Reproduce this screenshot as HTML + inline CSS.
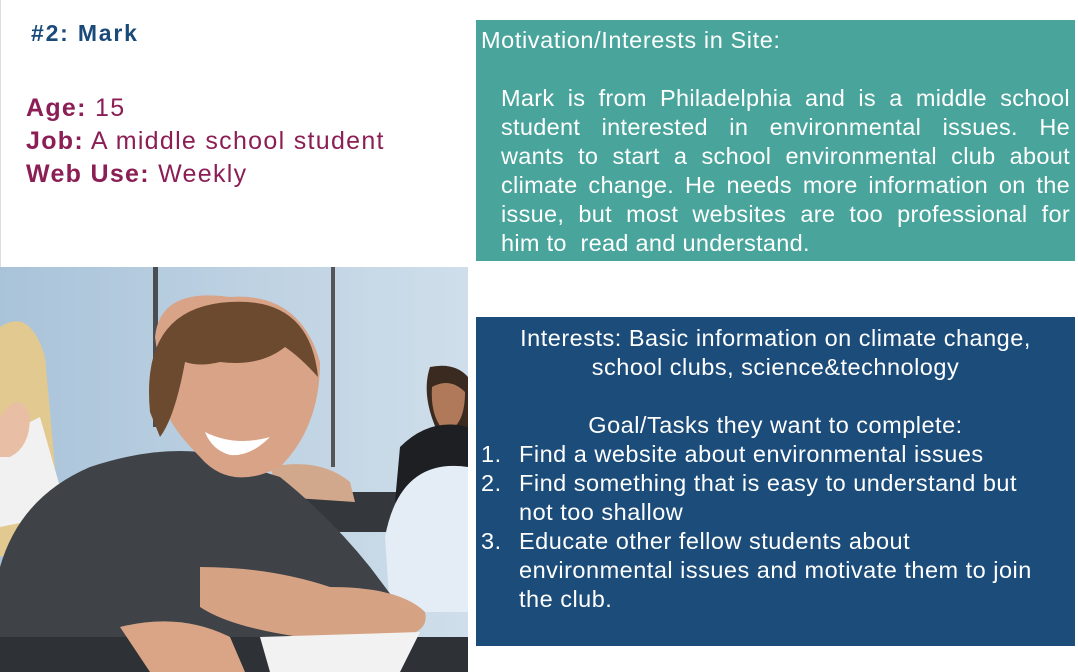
<!DOCTYPE html>
<html><head><meta charset="utf-8"><style>
*{margin:0;padding:0;box-sizing:border-box}
body{width:1078px;height:672px;background:#fff;position:relative;overflow:hidden;font-family:"Liberation Sans",Arial,sans-serif}
.abs{position:absolute}
.t{color:#1a4a7a;font-weight:bold;font-size:23px;letter-spacing:1.8px;left:31px;top:20px}
.info{left:26px;top:92px;color:#8b1f55;font-size:25px;letter-spacing:1.3px;line-height:33px;white-space:nowrap}
.teal{left:476px;top:20px;width:599px;height:241px;background:#49a59b;color:#fff;font-size:23.5px;letter-spacing:0.3px}
.blue{left:476px;top:317px;width:599px;height:329px;background:#1b4c7a;color:#fff;font-size:23.5px;letter-spacing:0.5px;line-height:29px;white-space:nowrap}
.teal .h{position:absolute;left:5px;top:7px;letter-spacing:0.6px}
.teal .p{position:absolute;left:25px;width:569px;line-height:29px}
.teal .p div{height:29px;white-space:nowrap;display:flex;justify-content:space-between}
.teal .p div.l{display:block}
.blue .c{text-align:center;width:599px}
.li{position:relative;padding-left:43px}
.li span{position:absolute;left:5px}
</style></head><body>
<div class="abs" style="left:0;top:0;width:1px;height:267px;background:#ddd"></div>
<div class="abs t">#2: Mark</div>
<div class="abs info"><b>Age:</b> 15<br><b>Job:</b> A middle school student<br><b>Web Use:</b> Weekly</div>
<svg class="abs" style="left:0;top:267px" width="468" height="405" viewBox="0 0 468 405">
<defs><linearGradient id="w" x1="0" x2="1"><stop offset="0" stop-color="#a9c3d9"/><stop offset="1" stop-color="#cfdeea"/></linearGradient></defs>
<rect width="468" height="405" fill="url(#w)"/>
<rect x="153" y="0" width="5" height="160" fill="#4a4d52"/>
<rect x="331" y="0" width="4" height="200" fill="#555"/>
<rect x="300" y="225" width="168" height="40" fill="#34383d"/>
<path d="M0 60 Q30 40 45 90 L55 200 L60 270 L0 290Z" fill="#e2c98f"/>
<path d="M0 170 L40 150 L60 220 L50 250 L0 260Z" fill="#f1f1f1"/>
<path d="M0 150 Q20 120 30 150 Q30 180 10 190 L0 190Z" fill="#e8bfa4"/>
<path d="M430 100 Q455 95 468 110 L468 170 L440 170 Q420 130 430 100Z" fill="#3a2a20"/>
<path d="M432 120 Q450 110 465 125 Q465 160 445 165 Q430 150 432 120Z" fill="#b07a5a"/>
<path d="M400 180 Q430 150 468 160 L468 250 L395 235Z" fill="#1d1f22"/>
<path d="M385 270 Q400 190 468 200 L468 345 L390 345Z" fill="#e4ecf6"/>
<path d="M270 200 Q320 190 350 215 L355 235 L280 230Z" fill="#d2a88c"/>
<path d="M0 405 L0 300 Q20 230 90 200 Q150 180 200 185 L280 210 Q330 250 370 300 L400 340 L380 370 L330 370 L300 405Z" fill="#3f4348"/>
<path d="M200 300 Q270 300 330 320 Q400 320 425 345 Q430 365 400 370 L300 370 Q230 360 200 340Z" fill="#d6a284"/>
<rect x="0" y="370" width="468" height="35" fill="#2e3236"/>
<path d="M260 370 L420 365 L400 405 L270 405Z" fill="#f2f2f2"/>
<path d="M120 360 Q180 345 230 370 L245 405 L150 405Z" fill="#d9a586"/>
<path d="M155 70 Q160 20 230 30 Q300 25 320 95 Q320 160 280 200 Q230 225 200 190 Q170 160 165 140 Z" fill="#d8a386"/>
<path d="M150 145 Q140 40 230 35 Q310 30 318 110 Q300 90 285 80 Q260 100 220 95 Q200 100 185 95 Q175 150 160 170Z" fill="#6b4a30"/>
<path d="M205 165 Q235 180 270 170 Q250 190 230 188 Q212 183 205 165Z" fill="#fff"/>
</svg>
<div class="abs teal"><div class="h">Motivation/Interests in Site:</div>
<div class="p" style="top:64px">
<div><span>Mark</span><span>is</span><span>from</span><span>Philadelphia</span><span>and</span><span>is</span><span>a</span><span>middle</span><span>school</span></div>
<div><span>student</span><span>interested</span><span>in</span><span>environmental</span><span>issues.</span><span>He</span></div>
<div><span>wants</span><span>to</span><span>start</span><span>a</span><span>school</span><span>environmental</span><span>club</span><span>about</span></div>
<div><span>climate</span><span>change.</span><span>He</span><span>needs</span><span>more</span><span>information</span><span>on</span><span>the</span></div>
<div><span>issue,</span><span>but</span><span>most</span><span>websites</span><span>are</span><span>too</span><span>professional</span><span>for</span></div>
<div class="l">him to&nbsp; read and understand.</div>
</div></div>
<div class="abs blue" style="padding-top:7px">
<div class="c">Interests: Basic information on climate change,<br>school clubs, science&amp;technology</div>
<div class="c" style="margin-top:29px">Goal/Tasks they want to complete:</div>
<div class="li"><span>1.</span>Find a website about environmental issues</div>
<div class="li"><span>2.</span>Find something that is easy to understand but<br>not too shallow</div>
<div class="li"><span>3.</span>Educate other fellow students about<br>environmental issues and motivate them to join<br>the club.</div>
</div>
</body></html>
